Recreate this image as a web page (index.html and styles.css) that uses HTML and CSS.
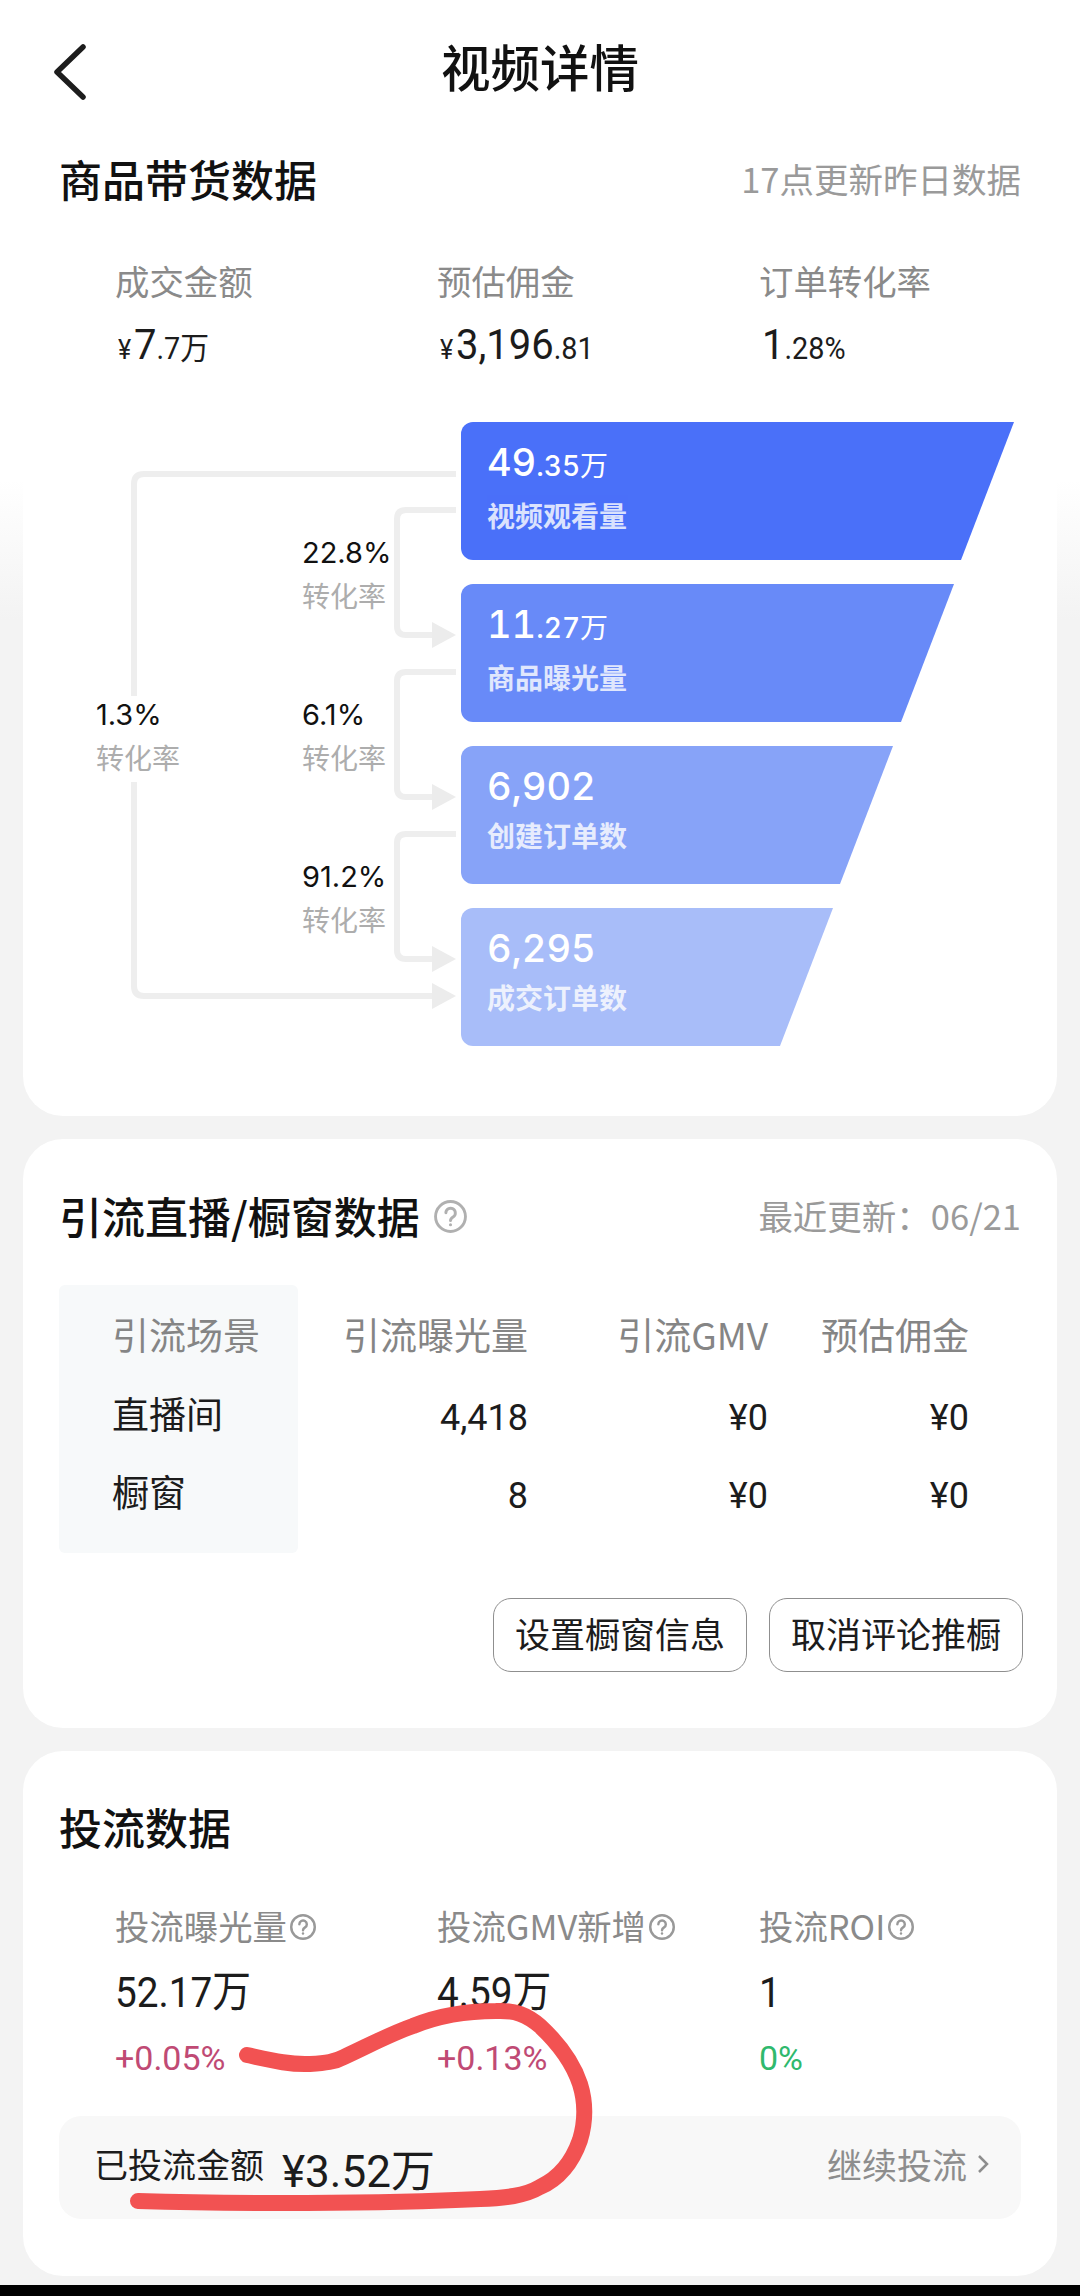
FILE: index.html
```html
<!DOCTYPE html>
<html lang="zh-CN">
<head>
<meta charset="utf-8">
<title>视频详情</title>
<link rel="stylesheet" href="styles.css">
</head>
<body>
<div class="page">
  <section class="card card-top">
    <header class="nav">
      <svg class="back" viewBox="0 0 34 56"><path d="M30 3 L4 28 L30 53"/></svg>
      <h1>视频详情</h1>
    </header>
    <div class="head head-first">
      <h2>商品带货数据</h2>
      <span class="note">17点更新昨日数据</span>
    </div>
    <div class="metrics">
      <div class="metric"><div class="m-label">成交金额</div><div class="m-value"><small>¥</small>7<i>.7万</i></div></div>
      <div class="metric"><div class="m-label">预估佣金</div><div class="m-value"><small>¥</small>3,196<i>.81</i></div></div>
      <div class="metric"><div class="m-label">订单转化率</div><div class="m-value">1<i>.28%</i></div></div>
    </div>
    <div class="funnel">
      <svg class="links" viewBox="0 0 460 640">
        <path d="M402 51 H90 Q80 51 80 61 V273"/>
        <path d="M80 359 V563 Q80 573 90 573 H382"/>
        <path d="M402 87 H352 Q343 87 343 96 V203 Q343 212 352 212 H382"/>
        <path d="M402 249 H352 Q343 249 343 258 V365 Q343 374 352 374 H382"/>
        <path d="M402 411 H352 Q343 411 343 420 V527 Q343 536 352 536 H382"/>
        <polygon class="tip" points="378,199 402,212 378,225"/>
        <polygon class="tip" points="378,361 402,374 378,387"/>
        <polygon class="tip" points="378,523 402,536 378,549"/>
        <polygon class="tip" points="378,560 402,573 378,586"/>
      </svg>
      <div class="rate rate-all"><b>1.3%</b><span>转化率</span></div>
      <div class="rates">
        <div class="rate"><b>22.8%</b><span>转化率</span></div>
        <div class="rate"><b>6.1%</b><span>转化率</span></div>
        <div class="rate"><b>91.2%</b><span>转化率</span></div>
      </div>
      <div class="bars">
        <div class="bar bar1"><div class="b-value">49<i>.35万</i></div><div class="b-label">视频观看量</div></div>
        <div class="bar bar2"><div class="b-value">11<i>.27万</i></div><div class="b-label">商品曝光量</div></div>
        <div class="bar bar3"><div class="b-value">6,902</div><div class="b-label">创建订单数</div></div>
        <div class="bar bar4"><div class="b-value">6,295</div><div class="b-label">成交订单数</div></div>
      </div>
    </div>
  </section>

  <section class="card card-mid">
    <div class="head">
      <h2>引流直播/橱窗数据<svg class="help" viewBox="0 0 32 32"><circle cx="16" cy="16" r="14.5"/><path d="M11.5 12.5 a4.6 4.6 0 1 1 7 4 c-1.7 1-2.5 1.8-2.5 3.5"/><circle class="dot" cx="16" cy="24" r="1.5"/></svg></h2>
      <span class="note">最近更新：06/21</span>
    </div>
    <div class="table">
      <div class="cell first th">引流场景</div><div class="th num">引流曝光量</div><div class="th num">引流GMV</div><div class="th num">预估佣金</div>
      <div class="cell first">直播间</div><div class="num">4,418</div><div class="num">¥0</div><div class="num">¥0</div>
      <div class="cell first">橱窗</div><div class="num">8</div><div class="num">¥0</div><div class="num">¥0</div>
    </div>
    <div class="actions">
      <button class="btn">设置橱窗信息</button>
      <button class="btn">取消评论推橱</button>
    </div>
  </section>

  <section class="card card-bot">
    <div class="head"><h2>投流数据</h2></div>
    <div class="metrics metrics-ads">
      <div class="metric">
        <div class="m-label">投流曝光量<svg class="help small" viewBox="0 0 32 32"><circle cx="16" cy="16" r="14.5"/><path d="M11.5 12.5 a4.6 4.6 0 1 1 7 4 c-1.7 1-2.5 1.8-2.5 3.5"/><circle class="dot" cx="16" cy="24" r="1.5"/></svg></div>
        <div class="a-value">52.17万</div><div class="delta up">+0.05%</div>
      </div>
      <div class="metric">
        <div class="m-label">投流GMV新增<svg class="help small" viewBox="0 0 32 32"><circle cx="16" cy="16" r="14.5"/><path d="M11.5 12.5 a4.6 4.6 0 1 1 7 4 c-1.7 1-2.5 1.8-2.5 3.5"/><circle class="dot" cx="16" cy="24" r="1.5"/></svg></div>
        <div class="a-value">4.59万</div><div class="delta up">+0.13%</div>
      </div>
      <div class="metric">
        <div class="m-label">投流ROI<svg class="help small" viewBox="0 0 32 32"><circle cx="16" cy="16" r="14.5"/><path d="M11.5 12.5 a4.6 4.6 0 1 1 7 4 c-1.7 1-2.5 1.8-2.5 3.5"/><circle class="dot" cx="16" cy="24" r="1.5"/></svg></div>
        <div class="a-value">1</div><div class="delta flat">0%</div>
      </div>
    </div>
    <div class="spent">
      <span class="s-label">已投流金额</span>
      <span class="s-value">¥3.52万</span>
      <span class="s-more">继续投流<svg class="more" viewBox="0 0 12 20"><path d="M2 2 L10 10 L2 18"/></svg></span>
    </div>
  </section>

  <div class="edge"></div>

  <svg class="scribble" viewBox="0 0 1080 2296">
    <path d="M247 2055 C270 2060 290 2065 310 2064 C325 2063 335 2062 344 2057 C370 2045 390 2034 413 2026 C440 2015 470 2011 496 2011 C515 2010 527 2015 540 2026 C555 2040 572 2060 580 2084 C585 2100 586 2120 580 2140 C573 2160 560 2178 540 2187 C525 2196 505 2198 480 2199 C380 2204 230 2204 138 2201"/>
  </svg>
</div>
</body>
</html>
```
FILE: styles.css
```css
* { box-sizing: border-box; }
html, body { margin: 0; padding: 0; }
body {
  width: 1080px;
  height: 2296px;
  overflow: hidden;
  font-family: "Noto Sans CJK SC", "Noto Sans", sans-serif;
  color: #1c1c1c;
}
.page {
  position: relative;
  width: 1080px;
  height: 2296px;
  padding: 0 23px;
  background: linear-gradient(#fff 0, #fff 480px, #f3f3f3 620px, #f3f3f3 100%);
  display: flex;
  flex-direction: column;
}
.card {
  background: #fff;
  border-radius: 40px;
  padding: 0 36px;
}
.card-top { height: 1116px; border-radius: 0 0 40px 40px; margin: 0 0 23px; }
.card-mid { height: 589px; margin-bottom: 23px; }
.card-bot { height: 525px; }

.nav {
  height: 137px;
  position: relative;
  display: flex;
  align-items: center;
  justify-content: center;
  padding-bottom: 6px;
}
.nav h1 {
  margin: 0;
  font-size: 49.5px;
  line-height: 1;
  font-weight: 500;
  color: #111;
}
.back {
  position: absolute;
  left: -6px;
  top: 44px;
  width: 34px;
  height: 56px;
  fill: none;
  stroke: #1d1d1d;
  stroke-width: 5.5;
  stroke-linecap: round;
  stroke-linejoin: round;
}
.head {
  display: flex;
  justify-content: space-between;
  align-items: center;
  height: 60px;
}
.head-first { margin-top: 11px; }
.card-mid .head { margin-top: 46px; }
.card-bot .head { margin-top: 45px; }
h2 {
  margin: 0;
  font-size: 43px;
  line-height: 60px;
  font-weight: 500;
  color: #111;
  display: flex;
  align-items: center;
}
.note { font-size: 34.5px; color: #9a9a9a; }

.metrics {
  display: grid;
  grid-template-columns: 322px 322px 1fr;
  padding-left: 56px;
  margin-top: 49px;
}
.m-label {
  font-size: 34.4px;
  line-height: 46px;
  color: #8a8a8a;
  display: flex;
  align-items: center;
}
.m-value {
  margin: 17px 0 0 3px;
  font-family: "Roboto", "Noto Sans CJK SC", sans-serif;
  font-size: 43px;
  line-height: 48px;
  font-weight: 400;
  color: #1c1c1c;
  white-space: nowrap;
  transform: scaleX(.93);
  transform-origin: left center;
}
.m-value small { font-size: 27px; margin-right: 3px; }
.m-value i { font-style: normal; font-size: 31px; }

.funnel {
  position: relative;
  display: flex;
  margin: 51px 0 0 -59px;
  width: 1080px;
  height: 624px;
}
.links {
  position: absolute;
  left: 54px;
  top: -2px;
  width: 460px;
  height: 640px;
  fill: none;
  stroke: #eeeeee;
  stroke-width: 6;
  stroke-linejoin: round;
}
.links .tip { fill: #ececec; stroke: none; }
.rate { display: flex; flex-direction: column; align-items: flex-start; }
.rate b {
  font-family: "Inter", "Roboto", sans-serif;
  font-weight: 400;
  font-size: 29px;
  line-height: 42px;
  color: #111;
  white-space: nowrap;
}
.rate span { font-size: 28px; line-height: 42px; color: #adadad; white-space: nowrap; }
.rate-all {
  position: relative;
  margin: 269px 0 0 96px;
  width: 90px;
  height: 86px;
  z-index: 1;
}
.rates {
  position: relative;
  width: 88px;
  margin-left: 116px;
  display: flex;
  flex-direction: column;
  gap: 78px;
  padding-top: 107px;
  z-index: 1;
}
.bars {
  position: relative;
  z-index: 1;
  margin-left: 71px;
  margin-top: -3px;
  display: flex;
  flex-direction: column;
  gap: 24px;
}
.bar {
  height: 138px;
  color: #fff;
  padding: 15px 0 0 26px;
  border-radius: 12px 0 0 12px;
  clip-path: polygon(0 0, 100% 0, calc(100% - 53px) 100%, 0 100%);
}
.bar1 { width: 553px; background: #4a70f9; }
.bar2 { width: 493px; background: #688af8; }
.bar3 { width: 432px; background: #87a3f8; }
.bar4 { width: 372px; background: #a8bdf9; }
.b-value {
  font-family: "Inter", "Roboto", sans-serif;
  font-size: 38px;
  line-height: 50px;
  font-weight: 500;
  white-space: nowrap;
  font-variant-numeric: tabular-nums;
}
.b-value i { font-style: normal; font-size: 28px; font-weight: 500; }
.b-label { font-size: 28px; line-height: 40px; margin-top: 4px; font-weight: 700; opacity: .8; }

.help {
  width: 33px;
  height: 33px;
  margin: 3px 0 0 14px;
  fill: none;
  stroke: #b0b0b0;
  stroke-width: 2.8;
  stroke-linecap: round;
  flex: none;
}
.help .dot { fill: #b0b0b0; stroke: none; }
.help.small { width: 26px; height: 26px; margin-left: 3px; stroke: #999; stroke-width: 3; margin-top: 4px; }
.help.small .dot { fill: #999; }

.table {
  margin-top: 40px;
  display: grid;
  grid-template-columns: 239px 230px 240px 201px;
  grid-template-rows: 98px 70px 85px 15px;
  align-items: center;
  position: relative;
  font-size: 37px;
  height: 268px;
}
.table::before {
  content: "";
  position: absolute;
  left: 0; top: 0;
  width: 239px;
  height: 268px;
  background: #f7f9fa;
  border-radius: 6px;
}
.cell { position: relative; padding: 0 0 10px 53px; color: #1c1c1c; }
.cell.th { color: #858585; padding-bottom: 0; }
.num { text-align: right; font-size: 36px; color: #1c1c1c; font-family: "Roboto", "Noto Sans CJK SC", sans-serif; }
.th.num { color: #858585; font-family: "Noto Sans CJK SC", sans-serif; font-size: 37px; }

.actions { display: flex; justify-content: flex-end; gap: 22px; margin-top: 45px; margin-right: -2px; }
.btn {
  width: 254px;
  height: 74px;
  border: 1.5px solid #8f8f8f;
  border-radius: 18px;
  background: #fff;
  padding: 0 0 6px;
  font-family: inherit;
  font-size: 35px;
  color: #1c1c1c;
}

.metrics-ads { margin-top: 46px; }
.a-value {
  margin-top: 20px;
  font-family: "Roboto", "Noto Sans CJK SC", sans-serif;
  font-size: 43px;
  line-height: 48px;
  font-weight: 400;
  color: #1c1c1c;
  white-space: nowrap;
  transform: scaleX(.9);
  transform-origin: left center;
}
.delta { margin-top: 22px; font-family: "Roboto", sans-serif; font-size: 34px; line-height: 40px; }
.up { color: #c04a74; }
.flat { color: #2fb96d; }

.spent {
  margin-top: 38px;
  height: 103px;
  background: #f8f8f8;
  border-radius: 22px;
  padding: 0 32px 0 35px;
  display: flex;
  align-items: center;
}
.s-label { font-size: 34px; color: #1c1c1c; padding-bottom: 8px; }
.s-value { margin-left: 18px; font-family: "Roboto", "Noto Sans CJK SC", sans-serif; font-size: 44px; font-weight: 400; color: #1c1c1c; }
.s-more { margin-left: auto; font-size: 35px; color: #8d8d8d; display: flex; align-items: center; padding-bottom: 8px; }
.more { width: 12px; height: 20px; margin-left: 10px; fill: none; stroke: #8d8d8d; stroke-width: 2.5; }

.edge {
  position: absolute;
  left: 0; right: 0; bottom: 0;
  height: 11px;
  background: #000;
}
.scribble {
  position: absolute;
  left: 0; top: 0;
  width: 1080px;
  height: 2296px;
  fill: none;
  stroke: #f25252;
  stroke-width: 16;
  stroke-linecap: round;
  stroke-linejoin: round;
  pointer-events: none;
}
```
